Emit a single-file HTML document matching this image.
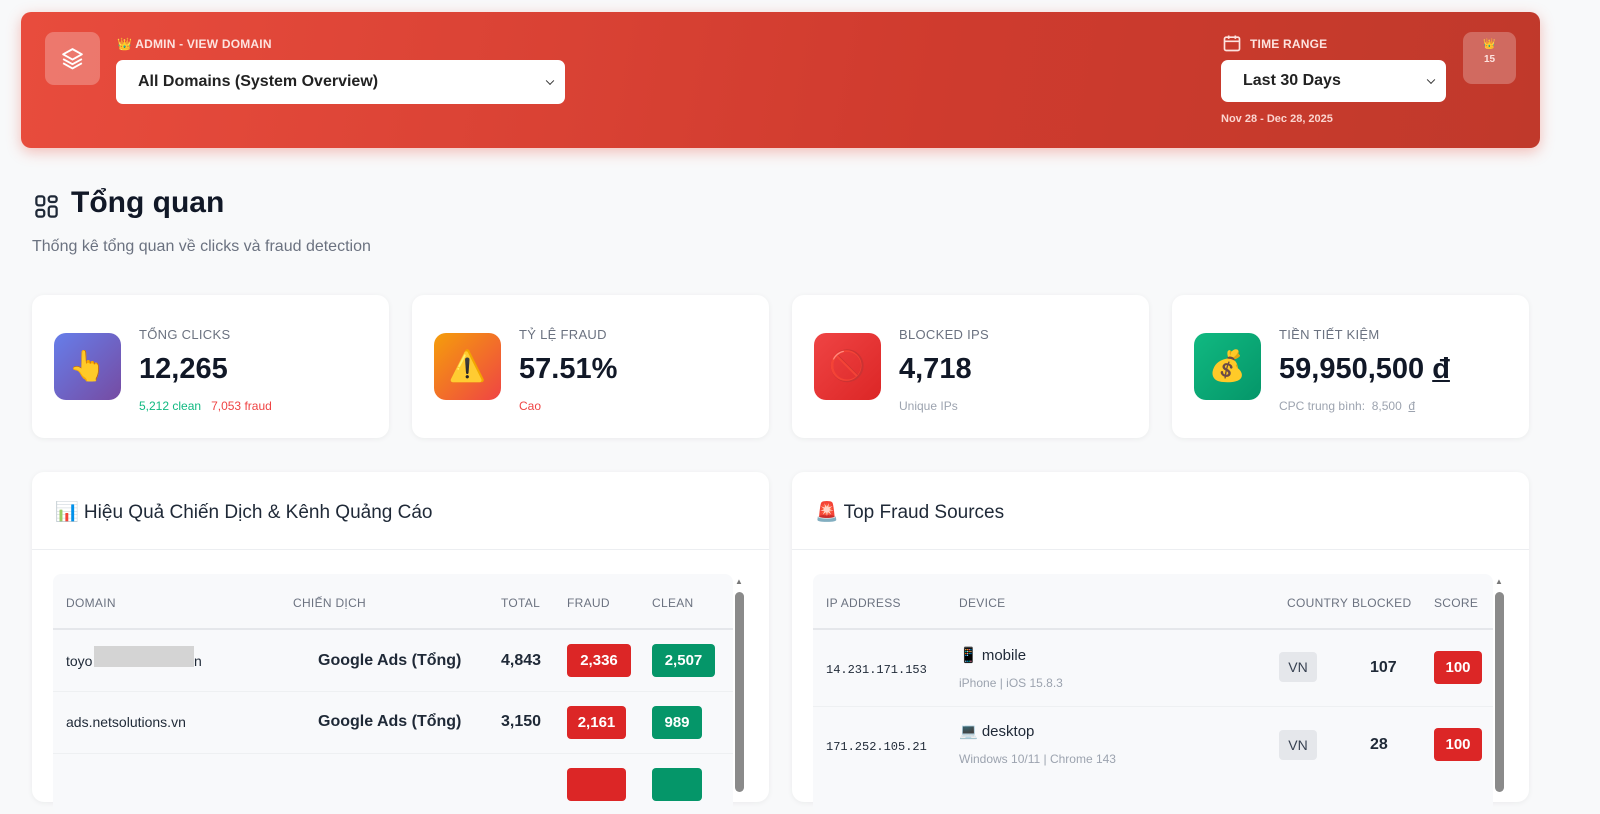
<!DOCTYPE html>
<html><head><meta charset="utf-8">
<style>
*{box-sizing:border-box;margin:0;padding:0}
body{width:1600px;height:786px;overflow:hidden;background:#f8f9fa;font-family:"Liberation Sans","DejaVu Sans",sans-serif;color:#1f2937;position:relative}
.a{position:absolute}
.hdr{left:21px;top:12px;width:1519px;height:136px;border-radius:10px;background:linear-gradient(100deg,#e84c3d,#cf3b2e 60%,#c0392b);box-shadow:0 4px 14px rgba(231,76,60,.35)}
.ibox{background:rgba(255,255,255,.25);border-radius:9px}
.lbl{color:#fde3df;font-size:12px;font-weight:bold;letter-spacing:.2px}
.sel{background:#fff;border-radius:7px;font-weight:bold;color:#222;font-size:16px;display:flex;align-items:center;padding-left:22px}
.sel:after{content:"";position:absolute;right:12px;top:50%;width:5px;height:5px;border-right:1.6px solid #333;border-bottom:1.6px solid #333;transform:translateY(-70%) rotate(45deg)}
.card{background:#fff;border-radius:12px;box-shadow:0 1px 6px rgba(0,0,0,.06);top:295px;height:143px;width:357px}
.ic{left:22px;top:38px;width:67px;height:67px;border-radius:12px;display:flex;align-items:center;justify-content:center;font-size:30px}
.cl{left:107px;top:32px;font-size:13px;color:#6b7280;letter-spacing:.3px}
.cv{left:107px;top:58px;font-size:29px;font-weight:bold;color:#111827}
.cs{left:107px;top:104px;font-size:12px;color:#9ca3af}
.panel{background:#fff;border-radius:12px;box-shadow:0 1px 6px rgba(0,0,0,.06);top:472px;height:330px;width:737px}
.ph{left:0;top:0;width:100%;height:78px;border-bottom:1px solid #eceef1}
.pt{left:23px;top:28px;font-size:19px;color:#1f2937}
.tb{background:#f8f9fb;border-radius:8px}
.th{font-size:12px;color:#6b7280;letter-spacing:.3px;top:22px}
.b{color:#fff;font-weight:bold;font-size:15px;border-radius:4px;height:33px;display:flex;align-items:center;justify-content:center}
.r{background:#dc2626}.g{background:#059669}
.sb{width:9px;border-radius:5px;background:#8a8a8a}
</style></head><body>
<div class="a hdr">
  <div class="a ibox" style="left:24px;top:20px;width:55px;height:53px">
    <svg class="a" style="left:15px;top:14px" width="25" height="25" viewBox="0 0 24 24" fill="none" stroke="#fff" stroke-width="1.8" stroke-linejoin="round"><path d="M12 3 3 8l9 5 9-5z"/><path d="m3 12.5 9 5 9-5"/><path d="m3 16.5 9 5 9-5"/></svg>
  </div>
  <div class="a lbl" style="left:96px;top:25px">👑 ADMIN - VIEW DOMAIN</div>
  <div class="a sel" style="left:95px;top:48px;width:449px;height:44px">All Domains (System Overview)</div>
  <svg class="a" style="left:1201px;top:21px" width="20" height="20" viewBox="0 0 24 24" fill="none" stroke="#fde3df" stroke-width="2"><rect x="3" y="5" width="18" height="16" rx="2"/><path d="M3 10h18M8 3v4M16 3v4"/></svg>
  <div class="a lbl" style="left:1229px;top:25px">TIME RANGE</div>
  <div class="a sel" style="left:1200px;top:48px;width:225px;height:42px">Last 30 Days</div>
  <div class="a" style="left:1200px;top:101px;font-size:11px;font-weight:bold;color:#fbd5cf">Nov 28 - Dec 28, 2025</div>
  <div class="a ibox" style="left:1442px;top:20px;width:53px;height:52px;text-align:center;color:#fde3df;font-size:10px;font-weight:bold;padding-top:7px">👑<br><span style="line-height:20px">15</span></div>
</div>

<svg class="a" style="left:33px;top:193px" width="27" height="27" viewBox="0 0 24 24" fill="none" stroke="#1f2937" stroke-width="2"><rect x="3" y="3" width="7" height="8" rx="2"/><rect x="14" y="3" width="7" height="5" rx="2"/><rect x="3" y="15" width="7" height="6" rx="2"/><rect x="14" y="12" width="7" height="9" rx="2"/></svg>
<div class="a" style="left:71px;top:186px;font-size:30px;font-weight:bold;color:#111827">Tổng quan</div>
<div class="a" style="left:32px;top:238px;font-size:16px;color:#6b7280">Thống kê tổng quan về clicks và fraud detection</div>

<div class="a card" style="left:32px">
  <div class="a ic" style="background:linear-gradient(135deg,#667eea,#764ba2)">👆</div>
  <div class="a cl">TỔNG CLICKS</div><div class="a cv">12,265</div>
  <div class="a cs"><span style="color:#10b981">5,212 clean</span>&nbsp;&nbsp; <span style="color:#ef4444">7,053 fraud</span></div>
</div>
<div class="a card" style="left:412px">
  <div class="a ic" style="background:linear-gradient(135deg,#f59e0b,#ef4444)">⚠️</div>
  <div class="a cl">TỶ LỆ FRAUD</div><div class="a cv">57.51%</div>
  <div class="a cs" style="color:#ef4444">Cao</div>
</div>
<div class="a card" style="left:792px">
  <div class="a ic" style="background:linear-gradient(135deg,#ef4444,#dc2626)">🚫</div>
  <div class="a cl">BLOCKED IPS</div><div class="a cv">4,718</div>
  <div class="a cs">Unique IPs</div>
</div>
<div class="a card" style="left:1172px">
  <div class="a ic" style="background:linear-gradient(135deg,#10b981,#059669)">💰</div>
  <div class="a cl">TIỀN TIẾT KIỆM</div><div class="a cv">59,950,500 <u>đ</u></div>
  <div class="a cs">CPC trung bình:&nbsp; 8,500 &nbsp;<u>đ</u></div>
</div>

<div class="a panel" style="left:32px">
  <div class="a ph"></div>
  <div class="a pt">📊 Hiệu Quả Chiến Dịch &amp; Kênh Quảng Cáo</div>
  <div class="a tb" style="left:21px;top:102px;width:680px;height:240px">
    <div class="a" style="left:0;top:54px;width:680px;height:2px;background:#e5e7eb"></div>
    <div class="a" style="left:0;top:117px;width:680px;height:1px;background:#eef0f2"></div>
    <div class="a" style="left:0;top:179px;width:680px;height:1px;background:#eef0f2"></div>
    <div class="a th" style="left:13px">DOMAIN</div>
    <div class="a th" style="left:240px">CHIẾN DỊCH</div>
    <div class="a th" style="left:448px">TOTAL</div>
    <div class="a th" style="left:514px">FRAUD</div>
    <div class="a th" style="left:599px">CLEAN</div>
    <div class="a" style="left:13px;top:79px;font-size:14px">toyo</div>
    <div class="a" style="left:41px;top:72px;width:100px;height:21px;background:#d4d4d4"></div>
    <div class="a" style="left:141px;top:79px;font-size:14px">n</div>
    <div class="a" style="left:265px;top:78px;font-size:16px;font-weight:bold">Google Ads (Tổng)</div>
    <div class="a" style="left:448px;top:78px;font-size:16px;font-weight:bold">4,843</div>
    <div class="a b r" style="left:514px;top:70px;width:64px">2,336</div>
    <div class="a b g" style="left:599px;top:70px;width:63px">2,507</div>
    <div class="a" style="left:13px;top:140px;font-size:14px">ads.netsolutions.vn</div>
    <div class="a" style="left:265px;top:139px;font-size:16px;font-weight:bold">Google Ads (Tổng)</div>
    <div class="a" style="left:448px;top:139px;font-size:16px;font-weight:bold">3,150</div>
    <div class="a b r" style="left:514px;top:132px;width:59px">2,161</div>
    <div class="a b g" style="left:599px;top:132px;width:50px">989</div>
    <div class="a b r" style="left:514px;top:194px;width:59px"></div>
    <div class="a b g" style="left:599px;top:194px;width:50px"></div>
  </div>
  <div class="a" style="left:703px;top:105px;font-size:8px;color:#777">▲</div>
  <div class="a sb" style="left:703px;top:120px;height:200px"></div>
</div>

<div class="a panel" style="left:792px">
  <div class="a ph"></div>
  <div class="a pt">🚨 Top Fraud Sources</div>
  <div class="a tb" style="left:21px;top:102px;width:680px;height:240px">
    <div class="a" style="left:0;top:54px;width:680px;height:2px;background:#e5e7eb"></div>
    <div class="a" style="left:0;top:132px;width:680px;height:1px;background:#eef0f2"></div>
    <div class="a th" style="left:13px">IP ADDRESS</div>
    <div class="a th" style="left:146px">DEVICE</div>
    <div class="a th" style="left:474px">COUNTRY</div>
    <div class="a th" style="left:539px">BLOCKED</div>
    <div class="a th" style="left:621px">SCORE</div>
    <div class="a" style="left:13px;top:89px;font-size:12px;font-family:'Liberation Mono',monospace">14.231.171.153</div>
    <div class="a" style="left:146px;top:72px;font-size:15px">📱 mobile</div>
    <div class="a" style="left:146px;top:102px;font-size:12px;color:#9ca3af">iPhone | iOS 15.8.3</div>
    <div class="a" style="left:466px;top:78px;width:38px;height:30px;border-radius:4px;background:#e5e7eb;font-size:14px;color:#374151;display:flex;align-items:center;justify-content:center">VN</div>
    <div class="a" style="left:557px;top:85px;font-size:16px;font-weight:bold">107</div>
    <div class="a b r" style="left:621px;top:77px;width:48px">100</div>
    <div class="a" style="left:13px;top:166px;font-size:12px;font-family:'Liberation Mono',monospace">171.252.105.21</div>
    <div class="a" style="left:146px;top:148px;font-size:15px">💻 desktop</div>
    <div class="a" style="left:146px;top:178px;font-size:12px;color:#9ca3af">Windows 10/11 | Chrome 143</div>
    <div class="a" style="left:466px;top:156px;width:38px;height:30px;border-radius:4px;background:#e5e7eb;font-size:14px;color:#374151;display:flex;align-items:center;justify-content:center">VN</div>
    <div class="a" style="left:557px;top:162px;font-size:16px;font-weight:bold">28</div>
    <div class="a b r" style="left:621px;top:154px;width:48px">100</div>
  </div>
  <div class="a" style="left:703px;top:105px;font-size:8px;color:#777">▲</div>
  <div class="a sb" style="left:703px;top:120px;height:200px"></div>
</div>
</body></html>
